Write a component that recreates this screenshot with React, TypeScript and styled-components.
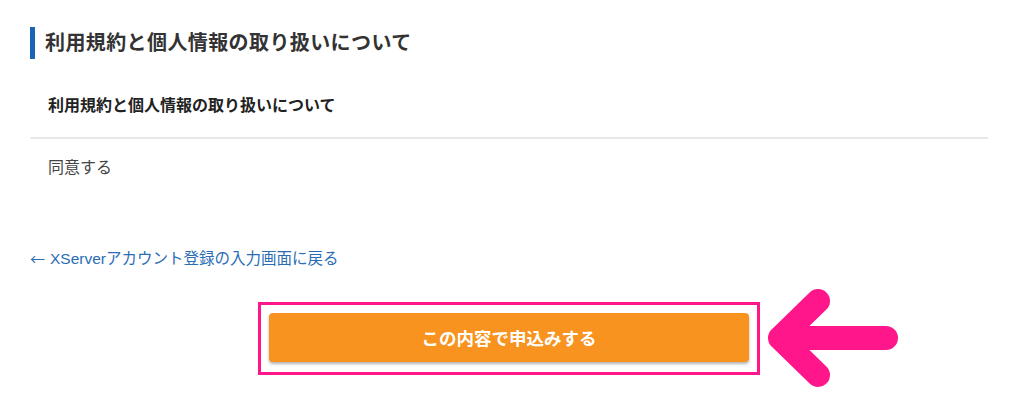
import React from "react";
import styled, { createGlobalStyle } from "styled-components";

const GlobalStyle = createGlobalStyle`
  html, body {
    margin: 0;
    padding: 0;
    background: #ffffff;
  }
  body {
    font-family: "Liberation Sans", "Noto Sans CJK JP", sans-serif;
    color: #333333;
  }
`;

const Page = styled.div`
  width: 1024px;
  height: 404px;
  box-sizing: border-box;
  padding: 27px 36px 0 30px;
  overflow: hidden;
`;

const SectionTitle = styled.h2`
  margin: 0;
  height: 32px;
  line-height: 32px;
  border-left: 5px solid #1b64b5;
  padding-left: 10px;
  font-size: 20px;
  letter-spacing: 0.4px;
  font-weight: 700;
  color: #333333;
`;

const Table = styled.div`
  margin-top: 16px;
  display: flex;
  flex-direction: column;
`;

const Row = styled.div<{ $divider?: boolean; $pad: number }>`
  padding: ${(p) => p.$pad}px 18px;
  line-height: 22px;
  font-size: 16px;
  border-bottom: ${(p) => (p.$divider ? "2px solid #e8e8e8" : "none")};
`;

const Label = styled.span`
  font-weight: 700;
  color: #222222;
`;

const Value = styled.span`
  font-weight: 400;
  color: #444444;
`;

const BackLink = styled.a`
  display: flex;
  align-items: center;
  gap: 5px;
  margin-top: 52px;
  font-size: 15.5px;
  line-height: 20px;
  color: #2a6db5;
  text-decoration: none;
`;

const LinkArrow = styled.span`
  font-family: "Noto Sans CJK JP", sans-serif;
  font-size: 15px;
`;

const ButtonArea = styled.div`
  margin-top: 33px;
  display: flex;
  justify-content: center;
`;

const Highlight = styled.div`
  position: relative;
`;

const Frame = styled.div`
  border: 3px solid #ff168b;
  padding: 8px 8px 10px 8px;
`;

const SubmitButton = styled.button`
  display: block;
  width: 480px;
  height: 49px;
  border: none;
  border-radius: 4px;
  background: #f7931e;
  box-shadow: 0 2px 3px rgba(0, 0, 0, 0.3);
  color: #ffffff;
  font-family: "Liberation Sans", "Noto Sans CJK JP", sans-serif;
  font-size: 17.5px;
  font-weight: 700;
  cursor: pointer;
`;

const Pointer = styled.svg`
  position: absolute;
  left: 100%;
  top: -21px;
  width: 150px;
  height: 110px;
`;

export default function App() {
  return (
    <>
      <GlobalStyle />
      <Page>
        <SectionTitle>利用規約と個人情報の取り扱いについて</SectionTitle>
        <Table>
          <Row $divider $pad={20}>
            <Label>利用規約と個人情報の取り扱いについて</Label>
          </Row>
          <Row $pad={18}>
            <Value>同意する</Value>
          </Row>
        </Table>
        <BackLink href="#">
          <LinkArrow>←</LinkArrow>
          <span>XServerアカウント登録の入力画面に戻る</span>
        </BackLink>
        <ButtonArea>
          <Highlight>
            <Frame>
              <SubmitButton type="button">この内容で申込みする</SubmitButton>
            </Frame>
            <Pointer viewBox="0 0 150 110">
              <path
                d="M58 20 L20 57 L58 94 M20 57 L126 57"
                fill="none"
                stroke="#ff168b"
                strokeWidth="24"
                strokeLinecap="round"
                strokeLinejoin="round"
              />
            </Pointer>
          </Highlight>
        </ButtonArea>
      </Page>
    </>
  );
}
